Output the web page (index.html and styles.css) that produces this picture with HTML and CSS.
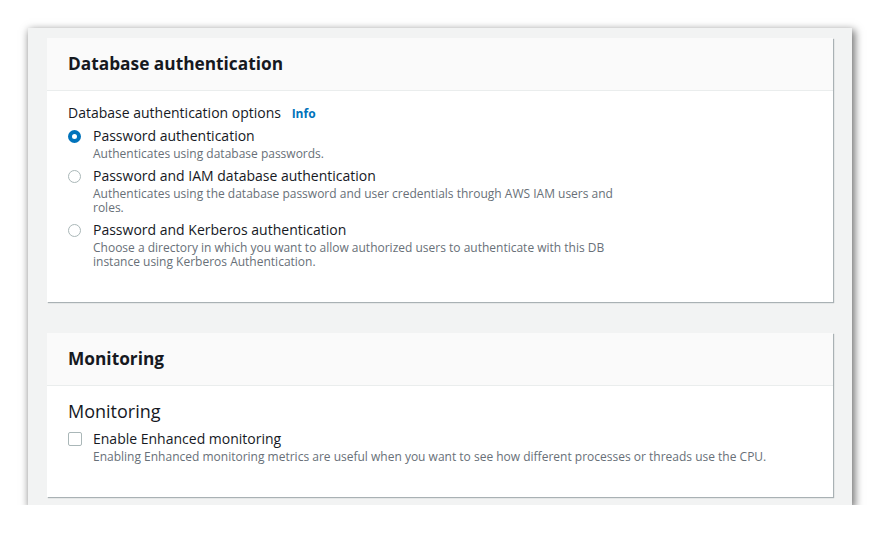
FILE: index.html
```html
<!DOCTYPE html>
<html>
<head>
<meta charset="utf-8">
<link rel="stylesheet" href="styles.css">
</head>
<body>
<div class="page">
  <div class="frame">
    <section class="card">
      <div class="card-header"><h2>Database authentication</h2></div>
      <div class="card-body">
        <div class="field-label">Database authentication options <a class="info">Info</a></div>
        <div class="options">
          <div class="option">
            <span class="radio checked"></span>
            <div class="option-text">
              <div class="option-label">Password authentication</div>
              <div class="option-desc">Authenticates using database passwords.</div>
            </div>
          </div>
          <div class="option">
            <span class="radio"></span>
            <div class="option-text">
              <div class="option-label">Password and IAM database authentication</div>
              <div class="option-desc">Authenticates using the database password and user credentials through AWS IAM users and roles.</div>
            </div>
          </div>
          <div class="option">
            <span class="radio"></span>
            <div class="option-text">
              <div class="option-label">Password and Kerberos authentication</div>
              <div class="option-desc">Choose a directory in which you want to allow authorized users to authenticate with this DB instance using Kerberos Authentication.</div>
            </div>
          </div>
        </div>
      </div>
    </section>
    <section class="card">
      <div class="card-header"><h2>Monitoring</h2></div>
      <div class="card-body">
        <h3>Monitoring</h3>
        <div class="option check-option">
          <span class="checkbox"></span>
          <div class="option-text">
            <div class="option-label">Enable Enhanced monitoring</div>
            <div class="option-desc wide">Enabling Enhanced monitoring metrics are useful when you want to see how different processes or threads use the CPU.</div>
          </div>
        </div>
      </div>
    </section>
  </div>
</div>
</body>
</html>
```

FILE: styles.css
```css
* { box-sizing: border-box; }
html, body { margin: 0; padding: 0; background: #ffffff; }
body {
  font-family: "Open Sans", "Noto Sans", "Liberation Sans", sans-serif;
  color: #16191f;
}
.page {
  padding: 28px 28px 0 28px;
  width: 880px;
}
.frame {
  width: 824px;
  height: 477px;
  background: #f2f3f3;
  padding: 10px 19px 8px 19px;
  display: flex;
  flex-direction: column;
  gap: 31px;
  box-shadow: 2px 3px 8px 1px rgba(0, 0, 0, 0.55);
}
.card {
  background: #ffffff;
  box-shadow: 1px 1px 1px rgba(0, 28, 36, 0.3);
}
.card-header {
  background: #fafafa;
  border-bottom: 1px solid #eaeded;
  height: 53px;
  padding: 0 21px;
  display: flex;
  align-items: center;
}
.card-header h2 {
  margin: 0;
  font-size: 17.3px;
  font-weight: 700;
  line-height: 20px;
  letter-spacing: 0;
}
.card-body {
  padding: 13px 21px 33px 21px;
}
.field-label {
  font-size: 14px;
  line-height: 18px;
  margin-bottom: 4px;
}
.info {
  color: #0073bb;
  font-weight: 700;
  font-size: 12px;
  margin-left: 7px;
}
.options {
  display: flex;
  flex-direction: column;
  gap: 6px;
}
.option {
  display: flex;
  align-items: flex-start;
  gap: 12px;
}
.check-option { gap: 11px; }
.radio {
  flex: none;
  width: 13px;
  height: 13px;
  border-radius: 50%;
  border: 1px solid #aab7b8;
  margin-top: 3px;
  background: #fff;
}
.radio.checked {
  border: 4px solid #0073bb;
}
.checkbox {
  flex: none;
  width: 14px;
  height: 14px;
  border: 1px solid #aab7b8;
  border-radius: 2px;
  margin-top: 2px;
  background: #fff;
}
.option-label {
  font-size: 14px;
  line-height: 18px;
  color: #16191f;
}
.option-desc {
  font-size: 12px;
  line-height: 14px;
  margin-top: 2px;
  color: #687078;
  max-width: 525px;
}
.option-desc.wide { max-width: none; }
h3 {
  margin: 0 0 7px 0;
  font-size: 18px;
  font-weight: 400;
  line-height: 24px;
}
```
